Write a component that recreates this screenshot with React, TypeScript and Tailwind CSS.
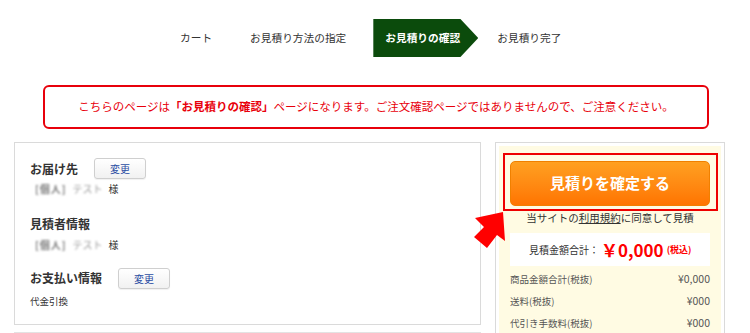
import React from 'react';

const steps = ['カート', 'お見積り方法の指定'];

function ChangeButton() {
  return (
    <button className="w-[52px] h-[21px] rounded-[3px] border border-[#cfcfcf] bg-gradient-to-b from-white to-[#f1f1f1] text-[10px] text-[#2c4ea3] shadow-[0_1px_1px_rgba(0,0,0,0.06)]">
      変更
    </button>
  );
}

function MaskedName() {
  return (
    <div className="flex items-center h-[16px] pl-[5px] text-[10px] text-[#333]">
      <span className="blur-[0.8px] text-[#777] font-bold tracking-[1px]">[個人]</span>
      <span className="blur-[0.8px] text-[#999] ml-[6px]">テスト</span>
      <span className="ml-[6px]">様</span>
    </div>
  );
}

export default function App() {
  return (
    <div className="w-[750px] h-[333px] overflow-hidden bg-white text-[#333] font-['Noto_Sans_CJK_JP','Liberation_Sans',sans-serif]">
      {/* step bar */}
      <div className="flex items-center pt-[19px] pl-[180px] h-[57px] text-[10.7px]">
        <span>{steps[0]}</span>
        <span className="ml-[38px]">{steps[1]}</span>
        <div className="ml-[27px] w-[105px] h-[38px] bg-[#0b4b0c] flex items-center pl-[12px] font-bold text-white [clip-path:polygon(0_0,83%_0,100%_50%,83%_100%,0_100%)]">
          お見積りの確認
        </div>
        <span className="ml-[19px]">お見積り完了</span>
      </div>

      {/* notice */}
      <div className="ml-[43px] mt-[28px] w-[666px] h-[44px] rounded-[6px] border-2 border-[#e8000b] flex items-center justify-center text-[11.5px] text-[#e8000b]">
        <span>
          こちらのページは<b>「お見積りの確認」</b>ページになります。ご注文確認ページではありませんので、ご注意ください。
        </span>
      </div>

      {/* main */}
      <div className="relative flex gap-[14px] pl-[14px] mt-[13px]">
        <div className="w-[467px] flex flex-col">
          <div className="h-[183px] border border-[#dadada] pl-[15px] pt-[15px]">
            <div className="flex items-center gap-[16px] h-[21px]">
              <span className="text-[12px] font-bold">お届け先</span>
              <ChangeButton />
            </div>
            <div className="mt-[1px]">
              <MaskedName />
            </div>
            <div className="mt-[19px] h-[18px] flex items-center text-[12px] font-bold">見積者情報</div>
            <div className="mt-[3px]">
              <MaskedName />
            </div>
            <div className="mt-[15px] flex items-center gap-[16px] h-[22px]">
              <span className="text-[12px] font-bold">お支払い情報</span>
              <ChangeButton />
            </div>
            <div className="mt-[4px] h-[16px] flex items-center text-[9.5px]">代金引換</div>
          </div>
          <div className="mt-[7px] h-[20px] border border-[#e3e3e3]"></div>
        </div>

        <div className="w-[230px] h-[200px] border border-[#dadada] p-[3px]">
          <div className="h-full bg-[#fffbe3] pt-[7px] px-[4px]">
            <div className="w-[215px] border-2 border-[#ee0000] pt-[6px] pb-[3px] pl-[5px]">
              <button className="w-[200px] h-[45px] rounded-[5px] bg-gradient-to-b from-[#ffa020] to-[#ff7400] border border-[#f08000] text-white text-[15px] font-bold">
                見積りを確定する
              </button>
            </div>
            <p className="text-center text-[10.5px] leading-[14px] text-[#333]">
              当サイトの<span className="underline">利用規約</span>に同意して見積
            </p>
            <div className="mx-[7px]">
              <div className="mt-[8px] h-[33px] bg-white flex items-center pl-[19px]">
                <span className="text-[10px]">見積金額合計：</span>
                <span className="ml-[2px] text-[17px] font-bold text-[#ff0000] leading-none">￥0,000</span>
                <span className="ml-[3px] text-[9px] font-bold text-[#ff0000]">(税込)</span>
              </div>
              <div className="mt-[2px] text-[9.5px] text-[#555]">
                <div className="flex justify-between items-center h-[22px]">
                  <span>商品金額合計(税抜)</span>
                  <span className="text-[10.5px]">¥0,000</span>
                </div>
                <div className="flex justify-between items-center h-[22px]">
                  <span>送料(税抜)</span>
                  <span className="text-[10.5px]">¥000</span>
                </div>
                <div className="flex justify-between items-center h-[22px]">
                  <span>代引き手数料(税抜)</span>
                  <span className="text-[10.5px]">¥000</span>
                </div>
              </div>
            </div>
          </div>
        </div>

        {/* pointer arrow */}
        <svg className="absolute left-[468px] top-[66px]" width="40" height="44" viewBox="0 0 40 44">
          <polygon points="7,10 35,4 37,33 29,27 19,40 6,29 16,19" fill="#ff0000" />
        </svg>
      </div>
    </div>
  );
}
